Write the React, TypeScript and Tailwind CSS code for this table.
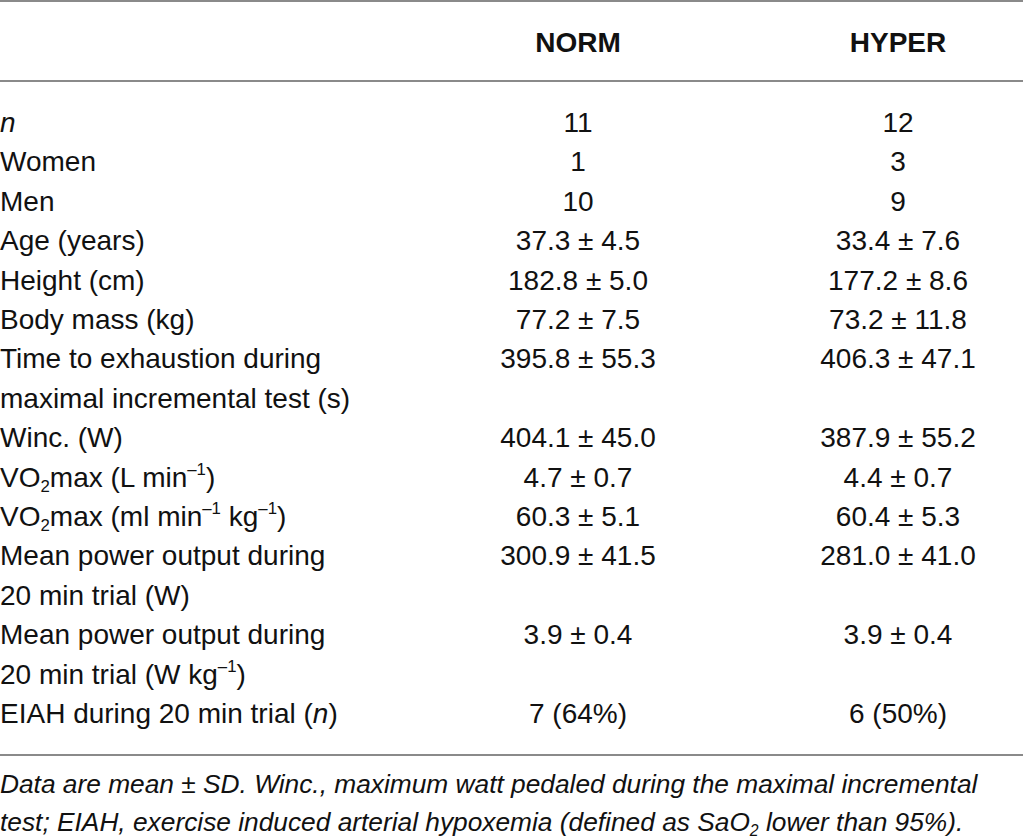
import React from 'react'

type Row = {
  label: React.ReactNode
  norm: string
  hyper: string
}

// small raised / lowered marks, closer to the printed table than the preflight 75%
const Sup = ({ children }: { children: React.ReactNode }) => (
  <sup className="text-[0.6em] top-[-0.7em]">{children}</sup>
)
const Sub = ({ children }: { children: React.ReactNode }) => (
  <sub className="text-[0.6em] bottom-[-0.3em]">{children}</sub>
)

const rows: Row[] = [
  { label: <i>n</i>, norm: '11', hyper: '12' },
  { label: 'Women', norm: '1', hyper: '3' },
  { label: 'Men', norm: '10', hyper: '9' },
  { label: 'Age (years)', norm: '37.3 ± 4.5', hyper: '33.4 ± 7.6' },
  { label: 'Height (cm)', norm: '182.8 ± 5.0', hyper: '177.2 ± 8.6' },
  { label: 'Body mass (kg)', norm: '77.2 ± 7.5', hyper: '73.2 ± 11.8' },
  {
    label: (
      <>
        Time to exhaustion during
        <br />
        maximal incremental test (s)
      </>
    ),
    norm: '395.8 ± 55.3',
    hyper: '406.3 ± 47.1',
  },
  { label: 'Winc. (W)', norm: '404.1 ± 45.0', hyper: '387.9 ± 55.2' },
  {
    label: (
      <>
        VO<Sub>2</Sub>max (L min<Sup>–1</Sup>)
      </>
    ),
    norm: '4.7 ± 0.7',
    hyper: '4.4 ± 0.7',
  },
  {
    label: (
      <>
        VO<Sub>2</Sub>max (ml min<Sup>–1</Sup> kg<Sup>–1</Sup>)
      </>
    ),
    norm: '60.3 ± 5.1',
    hyper: '60.4 ± 5.3',
  },
  {
    label: (
      <>
        Mean power output during
        <br />
        20 min trial (W)
      </>
    ),
    norm: '300.9 ± 41.5',
    hyper: '281.0 ± 41.0',
  },
  {
    label: (
      <>
        Mean power output during
        <br />
        20 min trial (W kg<Sup>–1</Sup>)
      </>
    ),
    norm: '3.9 ± 0.4',
    hyper: '3.9 ± 0.4',
  },
  {
    label: (
      <>
        EIAH during 20 min trial (<i>n</i>)
      </>
    ),
    norm: '7 (64%)',
    hyper: '6 (50%)',
  },
]

export default function App() {
  return (
    <div className="w-[1023px] h-[839px] bg-white text-[#111] font-['Liberation_Sans',Arial,sans-serif] overflow-hidden">
      {/* ── Header ── */}
      <div className="border-t-2 border-[#8a8a8a] pt-[21px] pb-[17.6px]">
        <div className="grid grid-cols-[360px_436px_204px] text-[28px] leading-[39.4px] font-bold">
          <div />
          <div className="text-center">NORM</div>
          <div className="text-center">HYPER</div>
        </div>
      </div>

      {/* ── Body ── */}
      <div className="border-t-2 border-[#8a8a8a] pt-[21px] pb-[20.6px]">
        <div className="grid grid-cols-[360px_436px_204px] text-[28px] leading-[39.4px]">
          {rows.map((r, i) => (
            <React.Fragment key={i}>
              <div className="whitespace-nowrap">{r.label}</div>
              <div className="text-center whitespace-nowrap">{r.norm}</div>
              <div className="text-center whitespace-nowrap">{r.hyper}</div>
            </React.Fragment>
          ))}
        </div>
      </div>

      {/* ── Footnote ── */}
      <div className="border-t-2 border-[#8a8a8a] pt-[9px] text-[26.3px] leading-[38px] italic whitespace-nowrap">
        Data are mean ± SD. Winc., maximum watt pedaled during the maximal incremental
        <br />
        test; EIAH, exercise induced arterial hypoxemia (defined as SaO<Sub>2</Sub> lower than 95%).
      </div>
    </div>
  )
}
